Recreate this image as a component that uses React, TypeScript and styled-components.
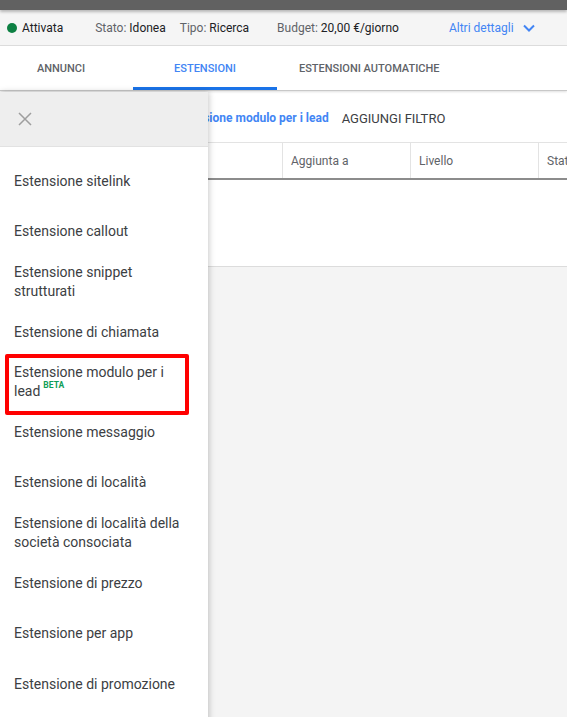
import styled, { createGlobalStyle } from "styled-components";

const GlobalStyle = createGlobalStyle`
  html, body {
    margin: 0;
    padding: 0;
    background: #f4f4f4;
    font-family: Roboto, "Liberation Sans", Arial, sans-serif;
  }
`;

const Page = styled.div`
  position: relative;
  width: 567px;
  height: 717px;
  overflow: hidden;
  background: #f4f4f4;
`;

const TopStrip = styled.div`
  height: 10px;
  background: #616161;
  box-shadow: 0 2px 3px rgba(0, 0, 0, 0.25);
  position: relative;
  z-index: 2;
`;

const StatusBar = styled.div`
  display: flex;
  align-items: center;
  height: 35px;
  background: #f5f5f5;
  border-bottom: 1px solid #dedede;
  font-size: 12px;
  color: #202124;
  white-space: nowrap;
`;

const StatusItem = styled.span<{ $left: number }>`
  display: flex;
  align-items: center;
  margin-left: ${(p) => p.$left}px;
`;

const Dot = styled.span`
  width: 10px;
  height: 10px;
  border-radius: 50%;
  background: #0d8043;
  margin-right: 5px;
`;

const Label = styled.span`
  color: #5f6368;
  margin-right: 3px;
`;

const MoreLink = styled.span`
  display: flex;
  align-items: center;
  margin-left: 50px;
  color: #4285f4;
  gap: 9px;
`;

const TabBar = styled.div`
  display: flex;
  height: 44px;
  background: #fff;
  border-bottom: 1px solid #c8c8c8;
  box-shadow: 0 1px 2px rgba(0, 0, 0, 0.12);
  position: relative;
  z-index: 1;
`;

const TabRow = styled.div`
  display: flex;
  margin-left: -11px;
`;

const Tab = styled.div<{ $active?: boolean }>`
  position: relative;
  display: flex;
  align-items: center;
  justify-content: center;
  min-width: 144px;
  padding: 0 22px;
  box-sizing: border-box;
  font-size: 11px;
  font-weight: 500;
  text-transform: uppercase;
  color: ${(p) => (p.$active ? "#4285f4" : "#5f6368")};

  &::after {
    content: "";
    display: ${(p) => (p.$active ? "block" : "none")};
    position: absolute;
    left: 0;
    right: 0;
    bottom: 0;
    height: 3px;
    background: #1a73e8;
  }
`;

const Card = styled.div`
  background: #fff;
  border-bottom: 1px solid #dcdcdc;
  height: 175px;
`;

const FilterRow = styled.div`
  display: flex;
  align-items: center;
  height: 51px;
  padding-left: 173px;
  gap: 13px;
  white-space: nowrap;
  padding-top: 3px;
  box-sizing: border-box;
`;

const FilterChip = styled.span`
  font-size: 12px;
  font-weight: 700;
  color: #4285f4;
`;

const AddFilter = styled.span`
  font-size: 13px;
  color: #3c4043;
  text-transform: uppercase;
`;

const TableHead = styled.div`
  display: grid;
  grid-template-columns: 282px 128px 128px 128px;
  height: 35px;
  border-top: 1px solid #e3e3e3;
  border-bottom: 2px solid #8c8c8c;
`;

const HeadCell = styled.div`
  display: flex;
  align-items: center;
  padding-left: 8px;
  font-size: 12px;
  color: #5f6368;
  border-left: 1px solid #e3e3e3;
  white-space: nowrap;
  overflow: hidden;

  &:first-child {
    border-left: none;
  }
`;

const Drawer = styled.aside`
  position: absolute;
  top: 92px;
  left: 0;
  bottom: -10px;
  width: 208px;
  background: #fff;
  box-shadow: 1px 0 6px rgba(0, 0, 0, 0.22);
  z-index: 5;
`;

const DrawerHead = styled.div`
  display: flex;
  align-items: center;
  height: 55px;
  padding-left: 18px;
  background: #eeeeee;
  border-bottom: 1px solid #e2e2e2;
  box-sizing: border-box;
`;

const DrawerList = styled.ul`
  list-style: none;
  margin: 0;
  padding: 9px 0 0;
`;

const DrawerItem = styled.li`
  position: relative;
  display: flex;
  align-items: center;
  height: 50.3px;
  padding: 0 24px 0 14px;
  font-size: 14px;
  line-height: 19px;
  color: #3c4043;
`;

const Beta = styled.span`
  display: inline-block;
  font-size: 8.5px;
  font-weight: 700;
  color: #0f9d58;
  margin-left: 3px;
  line-height: 9px;
  vertical-align: top;
  position: relative;
  top: -1px;
`;

const Highlight = styled.span`
  position: absolute;
  left: 5px;
  right: 19px;
  top: -3px;
  bottom: -8px;
  border: 4px solid #ff0000;
  border-radius: 2px;
  pointer-events: none;
`;

const items: { label: string; beta?: boolean }[] = [
  { label: "Estensione sitelink" },
  { label: "Estensione callout" },
  { label: "Estensione snippet strutturati" },
  { label: "Estensione di chiamata" },
  { label: "Estensione modulo per i lead", beta: true },
  { label: "Estensione messaggio" },
  { label: "Estensione di località" },
  { label: "Estensione di località della società consociata" },
  { label: "Estensione di prezzo" },
  { label: "Estensione per app" },
  { label: "Estensione di promozione" },
];

export default function App() {
  return (
    <Page>
      <GlobalStyle />
      <TopStrip />
      <StatusBar>
        <StatusItem $left={7}>
          <Dot />
          Attivata
        </StatusItem>
        <StatusItem $left={32}>
          <Label>Stato:</Label>Idonea
        </StatusItem>
        <StatusItem $left={14}>
          <Label>Tipo:</Label>Ricerca
        </StatusItem>
        <StatusItem $left={28}>
          <Label>Budget:</Label>20,00 €/giorno
        </StatusItem>
        <MoreLink>
          Altri dettagli
          <svg width="12" height="8" viewBox="0 0 12 8">
            <path d="M1 1.5l5 5 5-5" fill="none" stroke="#4285f4" strokeWidth="2" />
          </svg>
        </MoreLink>
      </StatusBar>
      <TabBar>
        <TabRow>
          <Tab>Annunci</Tab>
          <Tab $active>Estensioni</Tab>
          <Tab>Estensioni automatiche</Tab>
        </TabRow>
      </TabBar>
      <Card>
        <FilterRow>
          <FilterChip>Estensione modulo per i lead</FilterChip>
          <AddFilter>Aggiungi filtro</AddFilter>
        </FilterRow>
        <TableHead>
          <HeadCell>Estensione</HeadCell>
          <HeadCell>Aggiunta a</HeadCell>
          <HeadCell>Livello</HeadCell>
          <HeadCell>Stato</HeadCell>
        </TableHead>
      </Card>
      <Drawer>
        <DrawerHead>
          <svg width="14" height="14" viewBox="0 0 14 14">
            <path d="M1 1l12 12M13 1L1 13" stroke="#9e9e9e" strokeWidth="1.5" />
          </svg>
        </DrawerHead>
        <DrawerList>
          {items.map((it) => (
            <DrawerItem key={it.label}>
              <span>
                {it.label}
                {it.beta && <Beta>BETA</Beta>}
              </span>
              {it.beta && <Highlight />}
            </DrawerItem>
          ))}
        </DrawerList>
      </Drawer>
    </Page>
  );
}
